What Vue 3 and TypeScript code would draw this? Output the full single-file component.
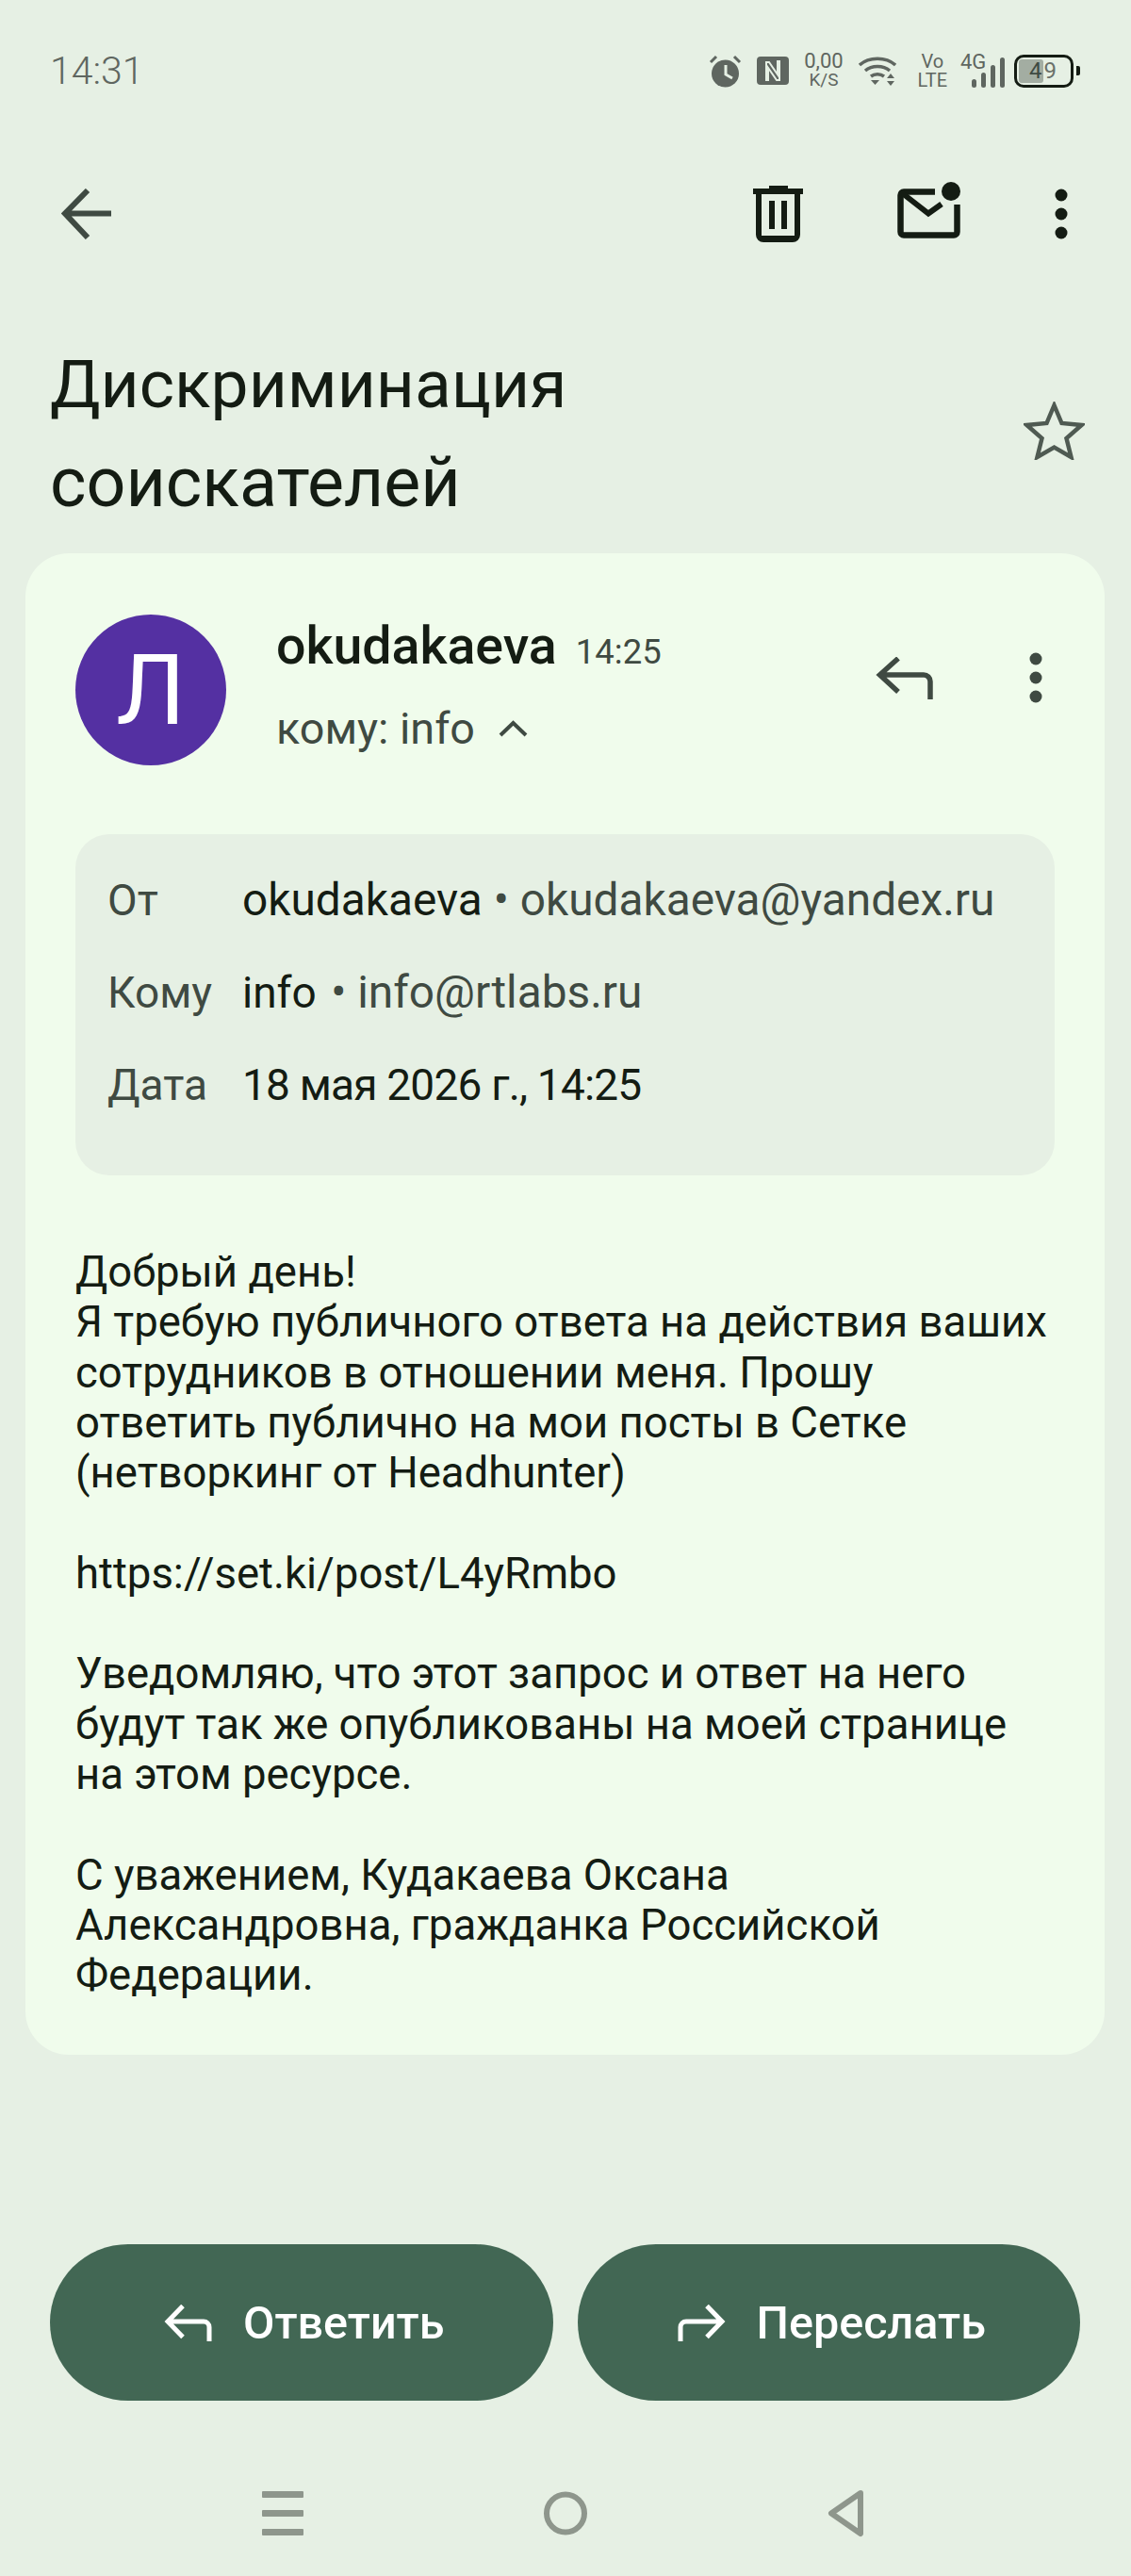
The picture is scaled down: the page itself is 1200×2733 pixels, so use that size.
<script setup lang="ts">
const bodyLines = [
  "Добрый день!",
  "Я требую публичного ответа на действия ваших",
  "сотрудников в отношении меня. Прошу",
  "ответить публично на мои посты в Сетке",
  "(нетворкинг от Headhunter)",
  "",
  "https://set.ki/post/L4yRmbo",
  "",
  "Уведомляю, что этот запрос и ответ на него",
  "будут так же опубликованы на моей странице",
  "на этом ресурсе.",
  "",
  "С уважением, Кудакаева Оксана",
  "Александровна, гражданка Российской",
  "Федерации.",
];
</script>

<template>
  <div class="screen">
    <header class="status">
      <span class="clock">14:31</span>
      <div class="status-icons">
        <svg width="35" height="35" viewBox="0 0 35 35">
          <circle cx="17.5" cy="20" r="14.5" fill="#5f6660" />
          <path d="M18 11v10l7 4" fill="none" stroke="#e6f0e4" stroke-width="3" />
          <path d="M2 8l6-6M33 8l-6-6" stroke="#5f6660" stroke-width="3" />
        </svg>
        <svg class="ic-nfc" width="34" height="30" viewBox="0 0 34 30">
          <rect width="34" height="30" rx="4" fill="#5f6660" />
          <path d="M10 25V6h3l9 13V5h2v20h-3L12 12v13z" fill="none" stroke="#e6f0e4" stroke-width="2" />
        </svg>
        <span class="stack speed"><b>0,00</b><i>K/S</i></span>
        <svg class="ic-wifi" width="40" height="32" viewBox="0 0 40 32" fill="none" stroke="#5f6660" stroke-width="3.5">
          <path d="M1 10c10-9 28-9 38 0M7 16c7-6 19-6 26 0M13 22c4-3 10-3 14 0" />
          <path d="M13 26h9l-4.500 5z" fill="#5f6660" stroke="none" />
          <path d="M30 24l4-5 4 5zM30 27h8l-4 5z" fill="#5f6660" stroke="none" />
        </svg>
        <span class="stack volte"><b>Vo</b><b>LTE</b></span>
        <span class="signal">
          <em>4G</em>
          <svg width="47" height="36" viewBox="0 0 47 36" fill="#5f6660">
            <rect x="12" y="27" width="5" height="9" rx="2.5" />
            <rect x="22" y="20" width="5" height="16" rx="2.5" />
            <rect x="32" y="12" width="5" height="24" rx="2.5" />
            <rect x="42" y="4" width="5" height="32" rx="2.5" />
          </svg>
        </span>
        <span class="battery">
          <span class="battery-body">
            <span class="battery-fill"></span>
            <span class="battery-num"><span class="dark">4</span>9</span>
          </span>
          <span class="battery-tip"></span>
        </span>
      </div>
    </header>

    <nav class="toolbar">
      <svg width="54" height="54" viewBox="0 0 54 54" fill="none" stroke="#3f4a42" stroke-width="6">
        <path d="M53 26.500H6M28 2L4 26.500 28 52" />
      </svg>
      <div class="toolbar-right">
        <svg width="53" height="60" viewBox="0 0 53 60" fill="#141c13">
          <path d="M17 0h20v3h16v6H0V3h17z" />
          <path d="M3 9h47v43a8 8 0 0 1-8 8H11a8 8 0 0 1-8-8zm6 0v44h35V9z" fill-rule="evenodd" />
          <rect x="17" y="16" width="6" height="30" />
          <rect x="30" y="16" width="6" height="30" />
        </svg>
        <svg class="ic-mail" width="67" height="60" viewBox="0 0 67 60" fill="none" stroke="#141c13" stroke-width="6.5">
          <path d="M40 10.500H7a3.500 3.500 0 0 0-3.500 3.500V53A3.500 3.500 0 0 0 7 56.500h53a3.500 3.500 0 0 0 3.500-3.500V24" />
          <path d="M6 12.500l27 21 14-10" stroke-width="6" />
          <circle cx="57" cy="10" r="10" fill="#141c13" stroke="none" />
        </svg>
        <svg width="14" height="54" viewBox="0 0 14 54" fill="#141c13">
          <circle cx="7" cy="7" r="6.500" />
          <circle cx="7" cy="27" r="6.500" />
          <circle cx="7" cy="47" r="6.500" />
        </svg>
      </div>
    </nav>

    <section class="subject">
      <h1><span class="title-a">Дискриминация</span><span class="title-b">соискателей</span></h1>
      <svg class="star" width="65" height="62" viewBox="0 0 64 62" fill="none" stroke="#4f5a52" stroke-width="4.500">
        <path d="M32 4l8 19 21 2-16 14 5 20-18-10.500L14 59l5-20L3 25l21-2z" />
      </svg>
    </section>

    <article class="card">
      <div class="sender">
        <div class="avatar">Л</div>
        <div class="sender-info">
          <div class="sender-top">
            <span class="sender-name">okudakaeva</span>
            <span class="sender-time">14:25</span>
          </div>
          <div class="sender-to">
            <span>кому: info</span>
            <svg width="33" height="18" viewBox="0 0 33 18" fill="none" stroke="#3f4a42" stroke-width="4">
              <path d="M3 16L16.500 3 30 16" />
            </svg>
          </div>
        </div>
        <div class="sender-actions">
          <svg width="61" height="45" viewBox="0 0 61 45" fill="none" stroke="#3f4a42" stroke-width="5.500">
            <path d="M58 45V26a7 7 0 0 0-7-7H6M24 1.500L4.500 19 24 37" />
          </svg>
          <svg width="14" height="54" viewBox="0 0 14 54" fill="#3f4a42">
            <circle cx="7" cy="7" r="6.500" />
            <circle cx="7" cy="27" r="6.500" />
            <circle cx="7" cy="47" r="6.500" />
          </svg>
        </div>
      </div>

      <dl class="details">
        <div class="row">
          <dt>От</dt>
          <dd class="wide">okudakaeva <span class="muted">• okudakaeva@yandex.ru</span></dd>
        </div>
        <div class="row">
          <dt>Кому</dt>
          <dd>info <span class="muted email">• info@rtlabs.ru</span></dd>
        </div>
        <div class="row">
          <dt>Дата</dt>
          <dd class="date">18 мая 2026 г., 14:25</dd>
        </div>
      </dl>

      <div class="body">
        <div v-for="(line, i) in bodyLines" :key="i" class="line">{{ line || "\u00a0" }}</div>
      </div>
    </article>

    <div class="actions">
      <button type="button" class="action">
        <svg width="51" height="39" viewBox="0 0 51 39" fill="none" stroke="#fff" stroke-width="5">
          <path d="M48 39V24a6 6 0 0 0-6-6H5M20 1.500L4 18l16 16.500" />
        </svg>
        Ответить
      </button>
      <button type="button" class="action">
        <svg width="51" height="39" viewBox="0 0 51 39" fill="none" stroke="#fff" stroke-width="5">
          <path d="M3 39V24a6 6 0 0 1 6-6h37M31 1.500L47 18 31 34.500" />
        </svg>
        Переслать
      </button>
    </div>

    <footer class="navbar">
      <svg width="44" height="47" viewBox="0 0 44 47" fill="#8e968c">
        <rect width="44" height="7" y="0" rx="1" />
        <rect width="44" height="7" y="20" rx="1" />
        <rect width="44" height="7" y="40" rx="1" />
      </svg>
      <svg width="46" height="47" viewBox="0 0 46 47" fill="none" stroke="#8e968c" stroke-width="6">
        <circle cx="23" cy="23.500" r="20" />
      </svg>
      <svg width="39" height="51" viewBox="0 0 39 51" fill="none" stroke="#8e968c" stroke-width="6" stroke-linejoin="round">
        <path d="M35 4L4 25.500 35 47z" />
      </svg>
    </footer>
  </div>
</template>

<style>
body {
  background: #e6f0e4;
}
</style>

<style scoped>
.screen {
  width: 1200px;
  height: 2733px;
  background: #e6f0e4;
  font-family: Roboto, "Liberation Sans", sans-serif;
  color: #141c13;
  display: flex;
  flex-direction: column;
  overflow: hidden;
}

.status {
  display: flex;
  justify-content: space-between;
  align-items: center;
  padding: 52px 54px 0 53px;
  height: 46px;
}

.clock {
  font-size: 41px;
  font-weight: 300;
  color: #5f6660;
}

.status-icons {
  display: flex;
  align-items: center;
  gap: 13px;
}

.ic-nfc,
.speed,
.ic-wifi {
  margin-left: 3px;
}

.volte {
  margin-left: 10px;
}

.stack {
  display: flex;
  flex-direction: column;
  align-items: center;
  color: #5f6660;
  line-height: 20px;
}

.stack b {
  font-weight: 400;
  font-size: 22px;
}

.stack i {
  font-style: normal;
  font-size: 19px;
}

.volte b {
  font-size: 20px;
}

.signal {
  position: relative;
  display: flex;
  margin-left: 1px;
}

.signal em {
  position: absolute;
  left: 0;
  top: -4px;
  font-style: normal;
  font-size: 22px;
  color: #5f6660;
}

.battery {
  display: flex;
  align-items: center;
  gap: 3px;
  margin-left: -3px;
}

.battery-body {
  position: relative;
  width: 63px;
  height: 35px;
  border: 3px solid #141c13;
  border-radius: 10px;
  box-sizing: border-box;
  display: flex;
  align-items: center;
  justify-content: center;
}

.battery-fill {
  position: absolute;
  left: 2px;
  top: 2px;
  bottom: 2px;
  width: 26px;
  background: #a3ada2;
  border-radius: 3px;
}

.battery-num {
  position: relative;
  font-size: 24px;
  letter-spacing: 2px;
  color: #6a716a;
}

.dark {
  color: #3f4a42;
}

.battery-tip {
  width: 4px;
  height: 10px;
  background: #141c13;
  border-radius: 0 2px 2px 0;
}

.toolbar {
  display: flex;
  justify-content: space-between;
  align-items: center;
  margin-top: 96px;
  padding: 0 67px 0 65px;
  height: 66px;
}

.toolbar-right {
  display: flex;
  align-items: center;
  gap: 100px;
}

.ic-mail {
  margin-bottom: 8px;
}

.subject {
  display: flex;
  justify-content: space-between;
  align-items: center;
  margin-top: 95px;
  padding: 0 49px 0 53px;
}

.subject h1 {
  margin: 0;
  font-weight: 400;
  line-height: 105px;
}

.title-a,
.title-b {
  display: block;
}

.title-a {
  font-size: 71.300px;
}

.title-b {
  font-size: 73.500px;
}

.star {
  margin-bottom: 6px;
}

.card {
  margin: 22px 28px 0 27px;
  height: 1593px;
  box-sizing: border-box;
  background: #f0fcec;
  border-radius: 46px;
  padding: 65px 53px 0;
}

.sender {
  display: flex;
  align-items: center;
}

.avatar {
  width: 160px;
  height: 160px;
  border-radius: 50%;
  background: #5430a2;
  color: #fff;
  font-size: 104px;
  display: flex;
  align-items: center;
  justify-content: center;
  flex: none;
}

.sender-info {
  margin-left: 53px;
  margin-top: -12px;
  flex: 1;
}

.sender-top {
  display: flex;
  align-items: baseline;
  gap: 20px;
}

.sender-name {
  font-size: 55.500px;
  font-weight: 500;
}

.sender-time {
  font-size: 36.500px;
  color: #3f4a42;
}

.sender-to {
  display: flex;
  align-items: center;
  gap: 24px;
  margin-top: 28px;
  font-size: 46.700px;
  color: #3f4a42;
}

.sender-actions {
  display: flex;
  align-items: center;
  gap: 102px;
  margin-right: 13px;
  margin-top: -26px;
}

.details {
  margin: 73px 0 0;
  height: 362px;
  box-sizing: border-box;
  background: #e6f0e4;
  border-radius: 36px;
  padding: 37px 34px 0;
  display: flex;
  flex-direction: column;
  gap: 32px;
}

.row {
  display: flex;
  font-size: 46px;
  line-height: 66px;
  height: 66px;
}

.row dt {
  width: 143px;
  color: #3f4a42;
}

.row dd {
  margin: 0;
}

.wide {
  font-size: 47.800px;
}

.email {
  font-size: 47.800px;
  margin-left: 4px;
}

.date {
  letter-spacing: -0.8px;
}

.muted {
  color: #3f4a42;
}

.body {
  margin-top: 76px;
  font-size: 45.500px;
  line-height: 53.300px;
  white-space: nowrap;
}

.actions {
  display: flex;
  gap: 26px;
  padding: 0 54px 0 53px;
  margin-top: 201px;
}

.action {
  flex: 1;
  height: 166px;
  border: 0;
  border-radius: 83px;
  background: #426754;
  color: #fff;
  font-family: inherit;
  font-size: 48.500px;
  font-weight: 500;
  display: flex;
  align-items: center;
  justify-content: center;
  gap: 33px;
  padding: 0 0 0 6px;
}

.navbar {
  display: flex;
  justify-content: center;
  align-items: center;
  gap: 255px;
  margin-top: 94px;
  padding-right: 6px;
}
</style>
